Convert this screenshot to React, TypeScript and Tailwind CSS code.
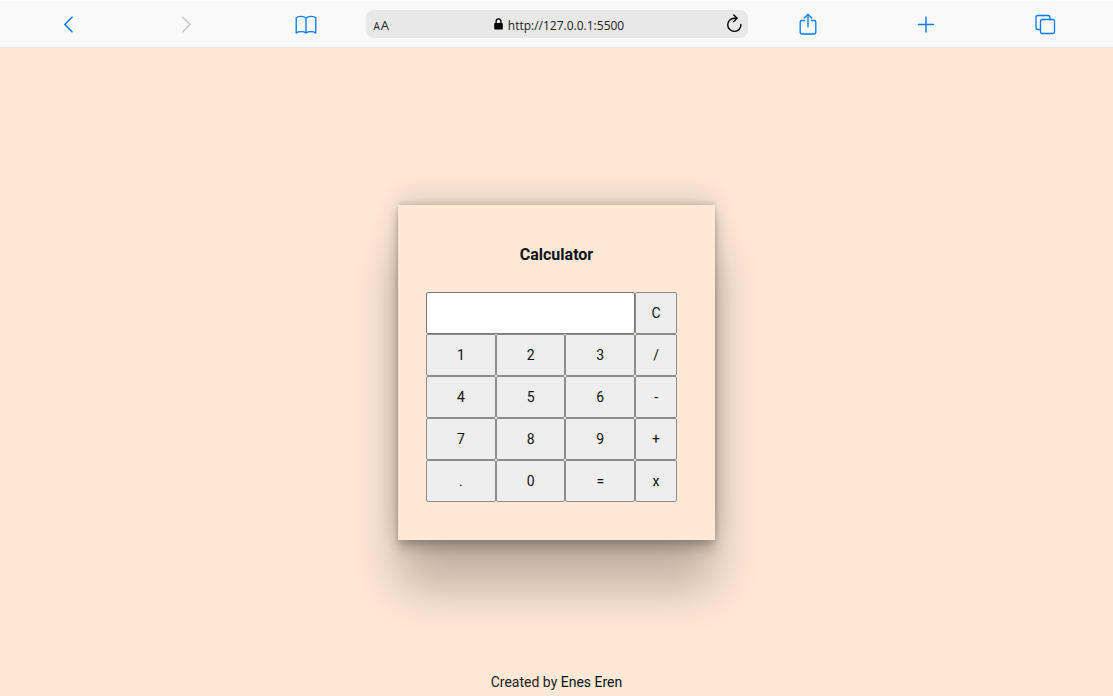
import { useState } from "react";
import type { ReactNode } from "react";

function ToolButton({ label, children, disabled = false }: { label: string; children: ReactNode; disabled?: boolean }) {
  return (
    <button
      type="button"
      aria-label={label}
      disabled={disabled}
      className="flex size-6 items-center justify-center text-[#007aff] disabled:text-[#c7c7c7]"
    >
      <svg
        viewBox="0 0 24 24"
        className="size-6"
        fill="none"
        stroke="currentColor"
        strokeWidth="1.4"
        strokeLinecap="round"
        strokeLinejoin="round"
        aria-hidden="true"
      >
        {children}
      </svg>
    </button>
  );
}

function BrowserBar() {
  return (
    <header className="grid h-12 shrink-0 grid-cols-[1fr_382px_1fr] items-center gap-12 border-t border-b border-t-white border-b-[#e6e6e6] bg-[#f9f9f9] px-14">
      <div className="flex items-center justify-between">
        <ToolButton label="Back">
          <path d="M16 5.2 8.8 12.5 16 19.8" strokeWidth="1.6" />
        </ToolButton>
        <ToolButton label="Forward" disabled>
          <path d="M7.800 5.200 15 12.500 7.800 19.800" strokeWidth="1.6" />
        </ToolButton>
        <ToolButton label="Bookmarks">
          <path d="M12 6.200C10.600 4.300 4.500 3.600 2.200 5.800V21C4.500 19.200 9.800 19.200 12 21C14.200 19.200 19.500 19.200 21.800 21V5.800C19.500 3.600 13.400 4.300 12 6.200V21" strokeWidth="1.300" />
        </ToolButton>
      </div>
      <div className="flex h-7 items-center justify-between rounded-lg bg-[#e8e8e8] pr-1 pl-2 font-['Open_Sans','Noto_Sans',sans-serif] text-xs text-[#222]">
        <button type="button" aria-label="Text size" className="flex w-5 items-baseline gap-px pt-0.5 leading-4">
          <span className="text-[10px]">A</span>
          <span className="text-[13px]">A</span>
        </button>
        <div className="flex items-center gap-1">
          <svg viewBox="0 0 11 14" className="h-3.5 w-[11px]" aria-hidden="true">
            <rect x="1.2" y="6" width="8.600" height="6.500" rx="1" fill="#000" />
            <path d="M3.100 6.500V4.400a2.400 2.600 0 0 1 4.800 0v2.100" fill="none" stroke="#000" strokeWidth="1.300" />
          </svg>
          <span className="pt-[3px]">http://127.0.0.1:5500</span>
        </div>
        <button type="button" aria-label="Reload" className="flex w-5 justify-end text-black">
          <svg viewBox="0 0 20 20" className="size-5 shrink-0" fill="none" stroke="currentColor" strokeWidth="1.400" aria-hidden="true">
            <path d="M12.800 4.200H10.300A6.600 6.600 0 1 0 16.900 10.400" strokeLinecap="round" />
            <path d="M9.800 1 13.100 4.200 9.800 7.400" strokeLinecap="round" strokeLinejoin="round" />
          </svg>
        </button>
      </div>
      <div className="flex items-center justify-between">
        <ToolButton label="Share">
          <path d="M8.500 8.500H5.600Q4.200 8.500 4.200 9.900V20.500Q4.200 22 5.600 22H18.400Q19.800 22 19.800 20.500V9.900Q19.800 8.500 18.400 8.500H15.500M12 15V2.500M8.300 6 12 2.300 15.700 6" strokeWidth="1.300" />
        </ToolButton>
        <ToolButton label="New tab">
          <path d="M12 5v15M4.500 12.500h15" />
        </ToolButton>
        <ToolButton label="Tabs">
          <rect x="7.500" y="7.500" width="14" height="14" rx="1.500" strokeWidth="1.300" />
          <path d="M7.500 17.500H5Q3 17.500 3 15.500V5.500Q3 3.500 5 3.500H15Q17 3.500 17 5.500V7.500" strokeWidth="1.300" />
        </ToolButton>
      </div>
    </header>
  );
}

const keys = ["1", "2", "3", "/", "4", "5", "6", "-", "7", "8", "9", "+", ".", "0", "=", "x"];

function evaluate(expression: string): string {
  const tokens = expression.match(/\d*\.?\d+|[-+x/]/g) ?? [];
  if (tokens.length === 0) return "";
  let total = 0;
  let term = Number(tokens[0]);
  for (let i = 1; i + 1 < tokens.length; i += 2) {
    const value = Number(tokens[i + 1]);
    if (tokens[i] === "x") term *= value;
    else if (tokens[i] === "/") term /= value;
    else {
      total += term;
      term = tokens[i] === "-" ? -value : value;
    }
  }
  const result = total + term;
  return Number.isFinite(result) ? String(result) : "Error";
}

function Key({ label, onPress }: { label: string; onPress: () => void }) {
  return (
    <button
      type="button"
      onClick={onPress}
      className="rounded-xs border border-[#8c8c8c] bg-[#eee] text-sm text-[#111] active:bg-[#ddd]"
    >
      {label}
    </button>
  );
}

function Calculator() {
  const [display, setDisplay] = useState("");
  const press = (key: string) => setDisplay((value) => (key === "=" ? evaluate(value) : value + key));

  return (
    <section className="bg-[#ffe8d6] pt-9 pr-[38px] pb-[38px] pl-7 shadow-[0_47px_48px_rgba(0,0,0,0.25),0_-10px_26px_rgba(0,0,0,0.12),0_3px_5px_rgba(0,0,0,0.12),0_10px_11px_rgba(0,0,0,0.17),0_-3px_4px_rgba(0,0,0,0.09)]">
      <h1 className="mb-6 ml-2.5 pt-px text-center text-base leading-[26px] font-bold text-[#06151a]">Calculator</h1>
      <div className="grid h-[210px] w-[251px] grid-cols-[5fr_5fr_5fr_3fr] grid-rows-5">
        <input
          type="text"
          aria-label="Result"
          readOnly
          value={display}
          className="col-span-3 min-w-0 rounded-xs border border-[#767676] bg-white px-2 text-right text-sm text-black outline-none"
        />
        <Key label="C" onPress={() => setDisplay("")} />
        {keys.map((key) => (
          <Key key={key} label={key} onPress={() => press(key)} />
        ))}
      </div>
    </section>
  );
}

export default function App() {
  return (
    <div className="flex min-h-screen flex-col bg-[#ffe8d6] font-[Roboto,sans-serif]">
      <BrowserBar />
      <main className="flex flex-1 items-center justify-center pt-6">
        <Calculator />
      </main>
      <footer className="pb-1 text-center text-sm leading-5 text-[#222]">
        Created by <a href="#" className="text-[#06151a]">Enes Eren</a>
      </footer>
    </div>
  );
}
